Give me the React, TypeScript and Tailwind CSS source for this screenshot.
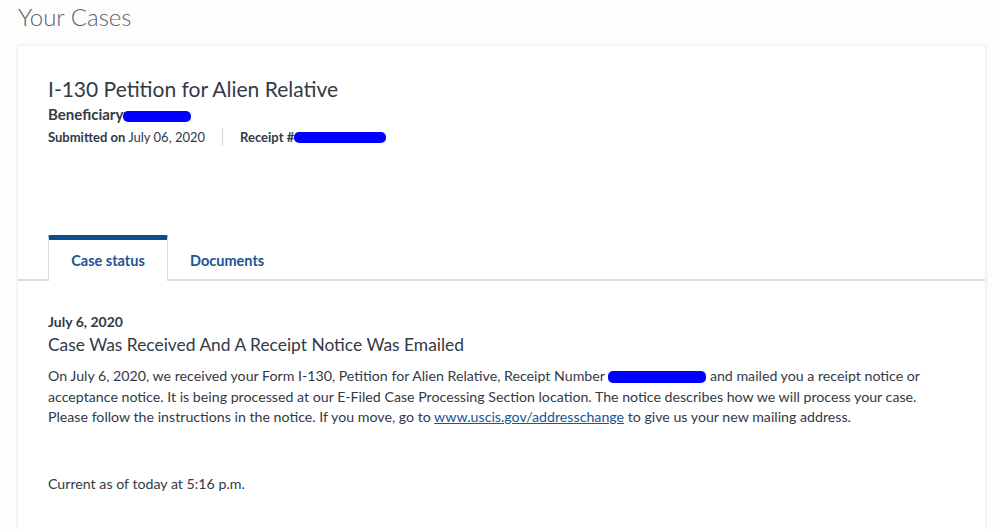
import React from "react";

const Redact = ({ w, h = 12, className = "" }: { w: number; h?: number; className?: string }) => (
  <span
    className={`inline-block align-middle bg-[#0000ff] rounded-[5px] ${className}`}
    style={{ width: w, height: h }}
  />
);

export default function App() {
  return (
    <div className="w-[1000px] h-[529px] overflow-hidden bg-[#fdfdfd] text-[#323a45]" style={{ fontFamily: "Lato, 'Open Sans', sans-serif" }}>
      <h1 className="pl-[18px] pt-[2px] h-[46px] text-[24px] leading-[30px] font-light text-[#5b616b]">Your Cases</h1>
      <div className="ml-[18px] w-[967px] bg-white rounded-[3px] shadow-[0_0_4px_rgba(0,0,0,0.12)] h-[600px]">
        <div className="px-[30px] pt-[30px] h-[189px]">
          <div className="text-[21px] leading-[26px] text-[#323a45]">I-130 Petition for Alien Relative</div>
          <div className="mt-[1px] text-[15px] leading-[22px] font-bold">
            Beneficiary:<Redact w={68} h={11} className="-ml-[4px]" />
          </div>
          <div className="mt-[2px] flex items-center text-[13px] leading-[20px]">
            <span><b>Submitted on</b> July 06, 2020</span>
            <span className="mx-[17px] w-px h-[18px] bg-[#d6d7d9]" />
            <span className="font-bold">Receipt #</span>
            <Redact w={92} h={11} />
          </div>
        </div>
        <div className="flex px-[30px] h-[46px] border-b-2 border-[#dcdcdc]">
          <div className="w-[120px] h-[46px] border-t-[5px] border-t-[#0b4f8f] border-x border-x-[#dcdcdc] bg-white rounded-t-[2px] flex items-center justify-center text-[14.5px] font-bold text-[#205493]">
            Case status
          </div>
          <div className="ml-[22px] h-[46px] pt-[5px] flex items-center text-[14.5px] font-bold text-[#205493]">Documents</div>
        </div>
        <div className="px-[30px] pt-[31px]">
          <div className="text-[14px] leading-[20px] font-bold">July 6, 2020</div>
          <div className="mt-[1px] text-[17.4px] leading-[24px]">Case Was Received And A Receipt Notice Was Emailed</div>
          <p className="mt-[9px] text-[14.2px] leading-[20.5px] w-[900px]">
            On July 6, 2020, we received your Form I-130, Petition for Alien Relative, Receipt Number <Redact w={98} h={12} /> and mailed you a receipt notice or acceptance notice. It is being processed at our E-Filed Case Processing Section location. The notice describes how we will process your case. Please follow the instructions in the notice. If you move, go to{" "}
            <a className="underline text-[#205493]">www.uscis.gov/addresschange</a> to give us your new mailing address.
          </p>
          <div className="mt-[46px] text-[14.2px] leading-[20px]">Current as of today at 5:16 p.m.</div>
        </div>
      </div>
    </div>
  );
}
